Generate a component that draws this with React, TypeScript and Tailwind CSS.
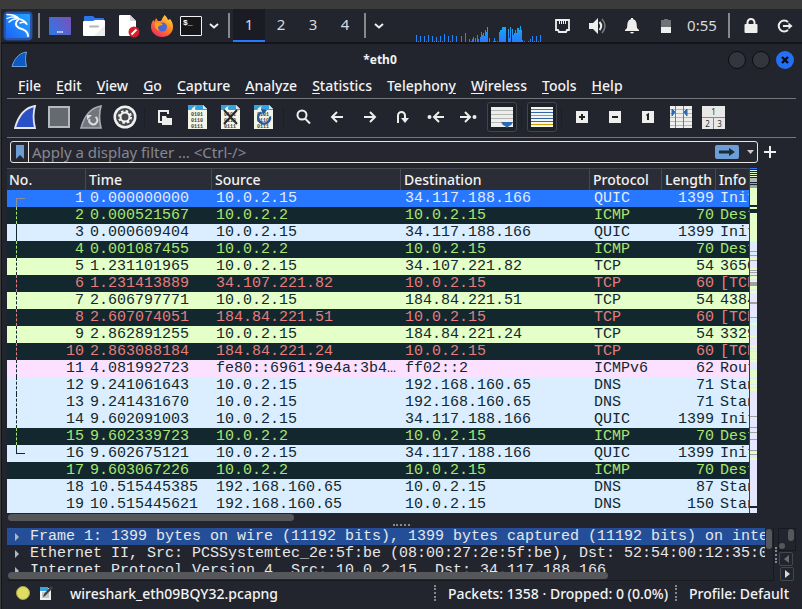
import type { ReactNode } from 'react';

/* ---------- data ---------- */

type Tone = 'selected' | 'icmp' | 'udp' | 'tcp' | 'bad' | 'icmp6';
type Packet = [string, string, string, string, string, string, Tone];

const packets: Packet[] = [
  ['0.000000000', '10.0.2.15', '34.117.188.166', 'QUIC', '1399', 'Init', 'selected'],
  ['0.000521567', '10.0.2.2', '10.0.2.15', 'ICMP', '70', 'Dest', 'icmp'],
  ['0.000609404', '10.0.2.15', '34.117.188.166', 'QUIC', '1399', 'Init', 'udp'],
  ['0.001087455', '10.0.2.2', '10.0.2.15', 'ICMP', '70', 'Dest', 'icmp'],
  ['1.231101965', '10.0.2.15', '34.107.221.82', 'TCP', '54', '3650', 'tcp'],
  ['1.231413889', '34.107.221.82', '10.0.2.15', 'TCP', '60', '[TCP', 'bad'],
  ['2.606797771', '10.0.2.15', '184.84.221.51', 'TCP', '54', '4384', 'tcp'],
  ['2.607074051', '184.84.221.51', '10.0.2.15', 'TCP', '60', '[TCP', 'bad'],
  ['2.862891255', '10.0.2.15', '184.84.221.24', 'TCP', '54', '3329', 'tcp'],
  ['2.863088184', '184.84.221.24', '10.0.2.15', 'TCP', '60', '[TCP', 'bad'],
  ['4.081992723', 'fe80::6961:9e4a:3b4…', 'ff02::2', 'ICMPv6', '62', 'Rout', 'icmp6'],
  ['9.241061643', '10.0.2.15', '192.168.160.65', 'DNS', '71', 'Stan', 'udp'],
  ['9.241431670', '10.0.2.15', '192.168.160.65', 'DNS', '71', 'Stan', 'udp'],
  ['9.602091003', '10.0.2.15', '34.117.188.166', 'QUIC', '1399', 'Init', 'udp'],
  ['9.602339723', '10.0.2.2', '10.0.2.15', 'ICMP', '70', 'Dest', 'icmp'],
  ['9.602675121', '10.0.2.15', '34.117.188.166', 'QUIC', '1399', 'Init', 'udp'],
  ['9.603067226', '10.0.2.2', '10.0.2.15', 'ICMP', '70', 'Dest', 'icmp'],
  ['10.515445385', '192.168.160.65', '10.0.2.15', 'DNS', '87', 'Stan', 'udp'],
  ['10.515445621', '192.168.160.65', '10.0.2.15', 'DNS', '150', 'Stan', 'udp'],
];

const tones: Record<Tone, string> = {
  selected: 'bg-[#2777ff] text-[#e2ebfb]',
  icmp: 'bg-[#12272e] text-[#a9e66f]',
  udp: 'bg-[#daeeff] text-[#12272e]',
  tcp: 'bg-[#e4ffc7] text-[#12272e]',
  bad: 'bg-[#12272e] text-[#e87c7c]',
  icmp6: 'bg-[#fce0ff] text-[#12272e]',
};

const G = '#e4ffc7';
const L = '#e7e6ff';
const B = '#daeeff';
const D = '#12272e';
const M = '#a0a0a0';

/* [height, colour] from top to bottom */
const minimap: [number, string][] = [
  [1, '#2777ff'], [1, D], [1, B], [1, D], [1, G], [1, D], [1, G], [1, D], [1, G], [1, D], [4, '#b4b4b8'], [1, D], [1, M], [1, D], [3, M],
  [17, G], [2, D], [2, G], [4, D], [28, G], [4, B], [6, L], [1, M], [3, B], [1, M], [2, L], [2, G], [1, M],
  [3, L], [4, L], [2, G], [1, M], [1, G], [1, M], [2, L], [1, M], [3, G], [2, L], [1, G], [4, M], [3, G], [2, L], [2, G],
  [9, L], [2, M], [13, L], [1, M], [5, B], [2, G], [9, B], [2, L], [1, G], [9, L], [1, G], [3, L], [1, G], [1, L],
  [7, G], [1, L], [2, G], [8, L], [8, G], [1, L], [5, G], [1, L], [2, G], [1, L], [3, G],
  [25, L], [1, M], [10, L], [1, M], [4, L], [1, M], [6, L], [1, M], [10, L], [1, M], [1, L], [2, G], [1, M], [3, L], [2, G],
  [46, L], [2, D], [5, L],
];

const menus: [string, number][] = [
  ['File', 0], ['Edit', 0], ['View', 0], ['Go', 0], ['Capture', 0], ['Analyze', 0],
  ['Statistics', 0], ['Telephony', 8], ['Wireless', 0], ['Tools', 0], ['Help', 0],
];

const cpu: [number, number][] = [
  [0, 7], [2, 1], [4, 6], [8, 6], [10, 1], [12, 7], [16, 6], [18, 1], [20, 5], [22, 1], [24, 6], [26, 1], [28, 8],
  [32, 6], [34, 1], [36, 7], [40, 6], [45, 6], [49, 9], [53, 3], [55, 1], [56, 3], [57, 5], [59, 4], [61, 7], [62, 3],
  [64, 5], [65, 10], [66, 7], [67, 9], [68, 6], [69, 12], [70, 10], [71, 15], [73, 4], [77, 1], [78, 4], [79, 1], [81, 1],
  [83, 10], [84, 12], [85, 12], [86, 15], [87, 15], [88, 15], [89, 15], [92, 13], [93, 4], [94, 15], [96, 13], [97, 7],
  [98, 9], [99, 12], [100, 9], [101, 14], [102, 14], [103, 12], [104, 16], [105, 12], [106, 2], [108, 1], [112, 1],
  [114, 3], [116, 6], [118, 1], [120, 6], [122, 1], [124, 7],
];

/* ---------- small parts ---------- */

function Cell({ w, children, label }: { w: string; children: ReactNode; label: string }) {
  return (
    <button aria-label={label} className={`flex h-full shrink-0 items-center justify-center ${w}`}>
      {children}
    </button>
  );
}

const Rule = () => <span className="mx-[3px] h-[25px] w-[2px] shrink-0 bg-[#87888c]" />;

const Chevron = () => (
  <svg width="10" height="6" viewBox="0 0 10 6" fill="none" stroke="#eeeeec" strokeWidth="2">
    <path d="M1 1l4 3.500L9 1" />
  </svg>
);

function Tool({ label, children, pressed }: { label: string; children: ReactNode; pressed?: boolean }) {
  return (
    <button
      aria-label={label}
      aria-pressed={pressed}
      className={
        pressed
          ? 'mr-px ml-[2px] flex h-[30px] w-[30px] shrink-0 items-center justify-center rounded-[3px] border border-[#42454c] bg-[#1c2227]'
          : 'flex h-[30px] w-[33px] shrink-0 items-center justify-center'
      }
    >
      {children}
    </button>
  );
}

const ToolGap = () => <span className="mx-[3px] h-[20px] w-px shrink-0 bg-[#1d1f26]" />;

const Page = ({ children }: { children?: ReactNode }) => (
  <svg width="21" height="24" viewBox="0 0 21 24">
    <path d="M1 0h15l4 4v20H1z" fill="#f4f5e6" />
    <path d="M1 0h15l4 4v1H1z" fill="#35a3e0" />
    <path d="M4 6q1-4 5-5-2 2 0 5z" fill="#f4f5e6" />
    <path d="M16 0v4h4z" fill="#d8e8ee" />
    <g fill="#3f4244" fontFamily="Liberation Mono, monospace" fontSize="5" fontWeight="bold">
      <text x="4" y="11">0101</text>
      <text x="4" y="17">0110</text>
      <text x="4" y="23">0111</text>
    </g>
    {children}
  </svg>
);

const Arrow = ({ children }: { children: ReactNode }) => (
  <svg width="19" height="18" viewBox="0 0 19 18" fill="none" stroke="#eeeeec" strokeWidth="2">
    {children}
  </svg>
);

const Square = ({ d }: { d: string }) => (
  <svg width="13" height="12" viewBox="0 0 13 12">
    <path d="M1 0h12v12H1z" fill="#eeeeec" />
    <path d={d} stroke="#1f2127" strokeWidth="2" fill="none" />
  </svg>
);

/* ---------- desktop panel ---------- */

function Panel() {
  return (
    <header className="flex h-[35px] items-center border-b-2 border-[#14151a] bg-[#23252e] pl-px">
      <Cell w="w-[32px]" label="Applications">
        <svg width="32" height="32" viewBox="0 0 32 32">
          <defs>
            <linearGradient id="kali" x1="0" y1="1" x2="1" y2="0">
              <stop offset="0" stopColor="#2062f5" />
              <stop offset="1" stopColor="#1fa7ff" />
            </linearGradient>
          </defs>
          <rect x="1" y="1" width="30" height="30" rx="5" fill="#2777ff" opacity=".25" />
          <rect x="2" y="2" width="28" height="28" rx="3" fill="#2777ff" opacity=".45" />
          <rect x="4" y="4" width="24" height="24" rx="1" fill="url(#kali)" />
          <g fill="none" stroke="#fff" strokeLinecap="round">
            <path d="M5 4.500c5 0 9 .5 12 4M5 8.500c4-2 8-2 12 0" strokeWidth="1.300" />
            <path d="M7 12c3-3 6-4 10-3 3 .5 5 1 7 4-2-1-4-1-6 0" strokeWidth="1.500" />
            <path d="M16 10c-3 2-3 6 1 8 5 1.500 9 3 9 8" strokeWidth="2" />
            <path d="M20 10l3 2 1.500 2" strokeWidth="1.500" />
          </g>
        </svg>
      </Cell>
      <span className="w-px" />
      <Rule />
      <Cell w="w-[34px]" label="Show desktop">
        <svg width="22" height="18" viewBox="0 0 22 18">
          <defs>
            <linearGradient id="desk" x1="0" y1=".5" x2="1" y2="0">
              <stop offset="0" stopColor="#3a72e0" />
              <stop offset="1" stopColor="#7a50b8" />
            </linearGradient>
          </defs>
          <rect width="22" height="18" rx="1" fill="url(#desk)" />
          <path d="M8 15h6" stroke="#fff" strokeWidth="1.500" strokeDasharray="1.500 .7" />
        </svg>
      </Cell>
      <Cell w="w-[34px]" label="Files">
        <svg width="22" height="22" viewBox="0 0 22 22">
          <path d="M1 2q0-1 1-1h8l2 2h8q1 0 1 1v6H1z" fill="#2f74e6" />
          <path d="M0 7q0-1 1-1h9l2-1h9q1 0 1 1v14q0 1-1 1H1q-1 0-1-1z" fill="#fff" />
          <path d="M22 10v10q0 1-1 1H11z" fill="#ededee" />
          <path d="M7 11.500h8" stroke="#b5b5b5" strokeWidth="2" strokeLinecap="round" />
        </svg>
      </Cell>
      <Cell w="w-[36px]" label="Text editor">
        <svg width="22" height="24" viewBox="0 0 22 24">
          <path d="M1 2q0-1 1-1h10l6 6v14q0 1-1 1H2q-1 0-1-1z" fill="#fff" />
          <path d="M12 1v6h6z" fill="#d5d5d5" />
          <circle cx="16" cy="18" r="5.500" fill="#d91f26" />
          <path d="M13.500 20.500l5-5" stroke="#fff" strokeWidth="2" />
        </svg>
      </Cell>
      <Cell w="w-[29px]" label="Firefox">
        <svg width="22" height="22" viewBox="0 0 22 22">
          <defs>
            <linearGradient id="fox" x1=".9" y1="0" x2=".2" y2="1">
              <stop offset="0" stopColor="#ffe14a" />
              <stop offset=".45" stopColor="#ff8a1f" />
              <stop offset="1" stopColor="#f0246a" />
            </linearGradient>
          </defs>
          <path d="M13.500 0c2 2 3 3 3.500 5l2-1c2 2 3 5 3 8 0 6-5 10-11 10S0 17.500 0 12c0-3 1-6 3-7l.5 2L5 3l2 3h3c1-2 2-4 3.500-6z" fill="url(#fox)" />
          <circle cx="11.500" cy="12" r="4.500" fill="#4b66d8" />
          <path d="M4 8c3-1 5 0 8 1-1 2-4 1-5 3-.5 2 1 3 2 4-4-1-6-4-5-8z" fill="#ffa01f" />
        </svg>
      </Cell>
      <Cell w="w-[30px]" label="Terminal">
        <span className="flex h-[20px] w-[22px] items-start rounded-[1px] border border-[#f2f2f2] bg-[#15171a] pl-[2px] font-['Liberation_Mono',monospace] text-[8px] leading-[11px] font-bold text-white">
          $_
        </span>
      </Cell>
      <Cell w="w-[16px]" label="More terminals"><Chevron /></Cell>
      <span className="w-[3px]" />
      <Rule />
      <nav aria-label="Workspaces" className="flex h-full text-[15px] text-[#d8dade]">
        {['1', '2', '3', '4'].map((n) => (
          <button
            key={n}
            className={
              n === '1'
                ? 'h-full w-[32px] border-b-2 border-[#2777ff] bg-[#1b1c23]'
                : 'h-full w-[32px] border-b-2 border-transparent'
            }
          >
            {n}
          </button>
        ))}
      </nav>
      <Rule />
      <Cell w="w-[20px]" label="Window list"><Chevron /></Cell>
      <span className="flex-1" />
      <svg className="shrink-0 self-end" width="126" height="18" viewBox="0 0 126 18" aria-label="CPU graph">
        <defs>
          <linearGradient id="cpu" gradientUnits="userSpaceOnUse" x1="0" y1="0" x2="0" y2="18">
            <stop offset="0" stopColor="#0fb4f0" />
            <stop offset="1" stopColor="#2a78ff" />
          </linearGradient>
        </defs>
        {cpu.map(([x, h]) => (
          <rect key={x} x={x} y={18 - h} width="1" height={h} fill="url(#cpu)" />
        ))}
      </svg>
      <span className="w-[3px]" />
      <Cell w="w-[34px]" label="Network">
        <svg width="15" height="14" viewBox="0 0 15 14" fill="none" stroke="#eeeeec">
          <path d="M1 1h13v10h-2l-1 2H4l-1-2H1z" strokeWidth="1.800" />
          <path d="M4.500 2v3M6.500 2v3M8.500 2v3M10.500 2v3" />
        </svg>
      </Cell>
      <Cell w="w-[37px]" label="Volume">
        <svg width="18" height="16" viewBox="0 0 18 16">
          <path d="M0 5h4l5-5v16l-5-5H0z" fill="#eeeeec" />
          <path d="M10.500 4q3.500 4 0 8" stroke="#eeeeec" strokeWidth="2" fill="none" />
          <path d="M13 1q6 7 0 14" stroke="#77797d" strokeWidth="1.500" fill="none" />
        </svg>
      </Cell>
      <Cell w="w-[32px]" label="Notifications">
        <svg width="14" height="16" viewBox="0 0 14 16" fill="#eeeeec">
          <path d="M6 0h2v1q3 1 3.500 4l.5 5 2 2v1H0v-1l2-2 .5-5Q3 2 6 1zM5 14h4q-.5 1.500-2 1.500T5 14z" />
        </svg>
      </Cell>
      <Cell w="w-[36px]" label="Battery">
        <svg width="10" height="14" viewBox="0 0 10 14">
          <path d="M3 0h4v1h3v7H0V1h3z" fill="#707277" />
          <path d="M0 8h10v6H0z" fill="#eeeeec" />
        </svg>
      </Cell>
      <span className="w-[36px] shrink-0 text-center text-[15px] text-[#d8dade]">0:55</span>
      <span className="w-[5px]" />
      <Rule />
      <Cell w="w-[35px]" label="Lock screen">
        <svg width="14" height="15" viewBox="0 0 14 15">
          <path d="M3.500 7V4.500a3.500 3.500 0 017 0V7" fill="none" stroke="#eeeeec" strokeWidth="2" />
          <rect x=".5" y="6" width="13" height="9" rx="1" fill="#eeeeec" />
        </svg>
      </Cell>
      <Cell w="w-[34px]" label="Log out">
        <svg width="16" height="14" viewBox="0 0 16 14" fill="none" stroke="#eeeeec" strokeWidth="2">
          <path d="M11 3A5.500 5.500 0 1011 11M6 7h6" />
          <path d="M11.500 3.500L15.500 7l-4 3.500z" fill="#eeeeec" stroke="none" />
        </svg>
      </Cell>
    </header>
  );
}

/* ---------- wireshark toolbar ---------- */

const fin = 'M1 23C4 12 9 3 21 1c-2 7-2 14 0 22z';

function Toolbar() {
  return (
    <div role="toolbar" className="flex h-[39px] items-center border-b border-[#74767c] pb-[2px] pl-[2px]">
      <Tool label="Start capture">
        <svg width="23" height="25" viewBox="0 0 23 25">
          <path d={fin} fill="#2b4fc4" stroke="#e6e6ea" strokeWidth="1.800" />
        </svg>
      </Tool>
      <Tool label="Stop capture">
        <svg width="23" height="22" viewBox="0 0 23 22">
          <path d="M2 1h20v20H2z" fill="#666a70" stroke="#b4b8bf" strokeWidth="2" />
        </svg>
      </Tool>
      <Tool label="Restart capture">
        <svg width="23" height="25" viewBox="0 0 23 25">
          <path d={fin} fill="#73777d" stroke="#a9acb2" strokeWidth="1.600" />
          <path d="M9.500 14a4 4 0 106-2" fill="none" stroke="#dcdde0" strokeWidth="2" />
          <path d="M7 15l0-5 5 0z" fill="#dcdde0" />
        </svg>
      </Tool>
      <Tool label="Capture options">
        <svg width="24" height="24" viewBox="0 0 24 24" fill="none">
          <circle cx="12" cy="12" r="11.500" fill="#f0f0f0" />
          <circle cx="12" cy="12" r="9" fill="#45484c" />
          <circle cx="12" cy="12" r="6" stroke="#f5f5f5" strokeWidth="2" strokeDasharray="2.400 2.312" />
          <circle cx="12" cy="12" r="4.500" stroke="#f5f5f5" strokeWidth="2" />
        </svg>
      </Tool>
      <ToolGap />
      <Tool label="Open">
        <svg width="17" height="16" viewBox="0 0 17 16">
          <path d="M12 5V2H3v11h3" fill="none" stroke="#eeeeec" strokeWidth="2" />
          <path d="M6 7h4l1 2h5v7H6z" fill="#eeeeec" />
        </svg>
      </Tool>
      <Tool label="Save"><Page /></Tool>
      <Tool label="Close">
        <Page><path d="M4 5l13 14M17 5L4 19" stroke="#22282d" strokeWidth="2" /></Page>
      </Tool>
      <Tool label="Reload">
        <Page>
          <path d="M8 7.500a6 6 0 109 4" fill="none" stroke="#27589f" strokeWidth="2.400" />
          <path d="M8 4l6 1-4 5z" fill="#27589f" />
        </Page>
      </Tool>
      <ToolGap />
      <Tool label="Find packet"><Arrow><circle cx="8" cy="7" r="4.500" /><path d="M11 10.500l5 5" /></Arrow></Tool>
      <Tool label="Previous packet"><Arrow><path d="M16 9H6M10 4L5 9l5 5" /></Arrow></Tool>
      <Tool label="Next packet"><Arrow><path d="M4 9h10M10 4l5 5-5 5" /></Arrow></Tool>
      <Tool label="Go to packet"><Arrow><path d="M5 15V7.500a3.500 3.500 0 017 0V11" /><path d="M8 10h8l-4 5z" fill="#eeeeec" stroke="none" /></Arrow></Tool>
      <Tool label="First packet"><Arrow><path d="M18 9H9M13 4L8 9l5 5M2 9h3" /><circle cx="3.500" cy="9" r="1" /></Arrow></Tool>
      <Tool label="Last packet"><Arrow><path d="M1 9h9M6 4l5 5-5 5M14 9h3" /><circle cx="15.500" cy="9" r="1" /></Arrow></Tool>
      <Tool label="Auto scroll" pressed>
        <svg width="22" height="22" viewBox="0 0 22 22">
          <path d="M0 1h22v20H0z" fill="#eeeeec" />
          <path d="M0 4.500h22M0 8.500h22M0 12.500h22M0 16.500h22" stroke="#b5b7b2" />
          <path d="M10 16h12q-1 3-4 4l-2 2-2-2q-3-1-4-4z" fill="#2f68b0" />
        </svg>
      </Tool>
      <ToolGap />
      <Tool label="Colorize" pressed>
        <svg width="22" height="22" viewBox="0 0 22 22" shapeRendering="crispEdges">
          <path d="M0 1h22v20H0z" fill="#f4f5f2" />
          <path d="M0 3h22v1H0z" fill="#e03a3a" />
          <path d="M0 6h22v1H0zM0 12h22v1H0z" fill="#3465a4" />
          <path d="M0 9h22v1H0z" fill="#73c216" />
          <path d="M0 15h22v1H0z" fill="#75507b" />
          <path d="M0 18h22v1H0z" fill="#c4a000" />
        </svg>
      </Tool>
      <ToolGap />
      <Tool label="Zoom in"><Square d="M4 6h6M7 3v6" /></Tool>
      <Tool label="Zoom out"><Square d="M4 6h6" /></Tool>
      <Tool label="Normal size"><Square d="M5.500 4.500L7 3.500V9" /></Tool>
      <Tool label="Resize columns">
        <svg width="23" height="22" viewBox="0 0 23 22">
          <path d="M1 0h22v22H1z" fill="#eeeeec" />
          <path d="M1 3.500h22M1 7.500h22M1 11.500h22M1 15.500h22M1 19.500h22" stroke="#b5b7b2" />
          <path d="M6.500 0v22M14.500 0v22" stroke="#77797a" />
          <path d="M3 3l3 3-3 4zM18 3l-3 3 3 4z" fill="#2f68b0" stroke="#2f68b0" />
        </svg>
      </Tool>
      <Tool label="Layout">
        <span className="grid h-[23px] w-[23px] shrink-0 grid-cols-2 gap-px bg-[#85878a] text-[8px] leading-[11px] text-[#333]">
          <span className="col-span-2 bg-[#e8e8e6]">1</span>
          <span className="bg-[#e8e8e6]">2</span>
          <span className="bg-[#e8e8e6]">3</span>
        </span>
      </Tool>
    </div>
  );
}

/* ---------- packet list ---------- */

function Ladder({ index }: { index: number }) {
  if (index > 15) return <span />;
  if (index === 0) return <span className="h-[9px] w-[9px] self-end border-t border-l border-[#8d8f94]" />;
  if (index === 15) return <span className="h-[9px] w-[9px] self-start border-b border-l border-current" />;
  return (
    <span
      className={
        index === 2 ? 'h-[17px] w-[9px] border-l border-current' : 'h-[17px] w-[9px] border-l border-dashed border-current'
      }
    />
  );
}

function PacketList() {
  return (
    <section className="flex pr-[39px]">
      <div className="min-w-0 flex-1 border-r border-[#3b3e45]">
        <table className="w-full table-fixed border-separate border-spacing-0">
          <colgroup>
            <col className="w-[79px]" />
            <col className="w-[126px]" />
            <col className="w-[189px]" />
            <col className="w-[189px]" />
            <col className="w-[72px]" />
            <col className="w-[54px]" />
            <col />
          </colgroup>
          <thead>
            <tr className="bg-[#2a2d35] text-left text-[14px] leading-[21px] text-[#f2f3f4]">
              {['No.', 'Time', 'Source', 'Destination', 'Protocol', 'Length', 'Info'].map((h) => (
                <th
                  key={h}
                  className="h-[22px] border-t border-r border-[#464950] p-0 pl-[3px] font-medium whitespace-nowrap first:pl-[2px] last:border-r-0"
                >
                  {h}
                </th>
              ))}
            </tr>
          </thead>
          <tbody className="font-['Liberation_Mono',monospace] text-[15px] leading-[17px] whitespace-nowrap">
            {packets.map(([time, src, dst, proto, len, info, tone], i) => (
              <tr key={i} className={`h-[17px] ${tones[tone]}`}>
                <td className="p-0 pr-[2px] pl-[9px]">
                  <div className="flex h-[17px] justify-between">
                    <Ladder index={i} />
                    <span>{i + 1}</span>
                  </div>
                </td>
                <td className="p-0 pl-[4px]">{time}</td>
                <td className="overflow-hidden p-0 pl-[4px]">{src}</td>
                <td className="overflow-hidden p-0 pl-[4px]">{dst}</td>
                <td className="p-0 pl-[4px]">{proto}</td>
                <td className="p-0 pr-[2px] text-right">{len}</td>
                <td className="overflow-hidden p-0 pl-[4px]">{info}</td>
              </tr>
            ))}
          </tbody>
        </table>
      </div>
      <div className="flex w-[7px] flex-col overflow-hidden">
        {minimap.map(([h, c], i) => (
          <span key={i} className="shrink-0" style={{ height: h, background: c }} />
        ))}
      </div>
    </section>
  );
}

const details = [
  'Frame 1: 1399 bytes on wire (11192 bits), 1399 bytes captured (11192 bits) on inte',
  'Ethernet II, Src: PCSSystemtec_2e:5f:be (08:00:27:2e:5f:be), Dst: 52:54:00:12:35:02',
  'Internet Protocol Version 4, Src: 10.0.2.15, Dst: 34.117.188.166',
];

const Dots = ({ vertical }: { vertical?: boolean }) => (
  <span
    className={
      vertical
        ? 'h-[16px] w-0 border-l-2 border-dotted border-[#85878b]'
        : 'h-0 w-[17px] border-t-2 border-dotted border-[#85878b]'
    }
  />
);

function Details() {
  return (
    <section className="flex">
      <div className="h-[53px] min-w-0 flex-1 border-r border-b border-[#191a20]">
        <div className="flex h-[44px]">
          <ul className="min-w-0 flex-1 overflow-hidden font-['Liberation_Mono',monospace] text-[15px] leading-[17px] whitespace-nowrap text-[#e6e7e9]">
            {details.map((line, i) => (
              <li key={line} className={i === 0 ? 'flex h-[17px] items-center bg-[#244f98] pl-[8px]' : 'flex h-[17px] items-center pl-[8px]'}>
                <svg className="mr-[11px] shrink-0" width="4" height="8" viewBox="0 0 4 8">
                  <path d="M0 0l4 4-4 4z" fill="#b4b7bf" />
                </svg>
                {line}
              </li>
            ))}
          </ul>
          <span className="mt-px mr-px ml-px h-[20px] w-[6px] rounded-full bg-[#56575b]" />
        </div>
        <span className="ml-px block h-[7px] w-[600px] rounded-full bg-[#56575b]" />
      </div>
      <div className="flex w-[4px] items-center justify-center"><Dots vertical /></div>
      <div className="flex w-[18px] flex-col items-center border-t border-[#191a20]">
        <div className="flex h-[22px] w-full items-end justify-between border-x border-b border-[#191a20]">
          <span className="mb-[1px] size-[6px] rounded-full bg-[#56575b]" />
          <span className="mr-px mb-[9px] h-[12px] w-[6px] rounded-full bg-[#56575b]" />
        </div>
        <button aria-label="Scroll left" className="mt-px mr-[2px] flex size-[14px] items-center justify-center rounded-[2px] border border-[#45474e]">
          <svg width="5" height="8" viewBox="0 0 5 8"><path d="M5 0L0 4l5 4z" fill="#6a6c71" /></svg>
        </button>
        <button aria-label="Scroll right" className="mt-px flex size-[14px] items-center justify-center rounded-[2px] border border-[#45474e]">
          <svg width="5" height="8" viewBox="0 0 5 8"><path d="M0 0l5 4-5 4z" fill="#d6d7d9" /></svg>
        </button>
      </div>
    </section>
  );
}

export default function App() {
  return (
    <div className="min-h-screen w-full overflow-hidden bg-[#3b3b3b] pt-[9px] pl-px font-['Noto_Sans',sans-serif]">
      <Panel />
      <main className="min-h-[565px] border-l border-[#14151a] bg-[#23252e] pr-[6px] pl-[5px] text-[14px] text-[#f2f3f4]">
        <div className="flex h-[31px] items-center pl-[4px]">
          <svg width="17" height="17" viewBox="0 0 17 17">
            <path d="M1 15.500C3 9 7 2 15.500 1c-1.500 5-1 10 0 14.500z" fill="#0f59c4" stroke="#6aa3d8" />
          </svg>
          <h1 className="flex-1 pl-[4px] text-center text-[12px] font-bold">*eth0</h1>
          <div className="flex gap-[6px] pr-[2px]">
            <button aria-label="Minimize" className="size-[18px] rounded-full border border-[#0c0d10] bg-[#33363f]" />
            <button aria-label="Maximize" className="size-[18px] rounded-full border border-[#0c0d10] bg-[#33363f]" />
            <button aria-label="Close window" className="flex size-[18px] items-center justify-center rounded-full bg-[#2470f5]">
              <svg width="8" height="8" viewBox="0 0 8 8"><path d="M1 1l6 6M7 1L1 7" stroke="#0b0d14" strokeWidth="2.400" /></svg>
            </button>
          </div>
        </div>
        <nav className="flex h-[24px] items-center gap-[15px] border-b border-[#74767c] pb-[2px] pl-[11px] font-medium">
          {menus.map(([name, at]) => (
            <button key={name} className="shrink-0">
              {name.slice(0, at)}
              <u className="underline-offset-2">{name[at]}</u>
              {name.slice(at + 1)}
            </button>
          ))}
        </nav>
        <Toolbar />
        <div className="flex h-[30px] items-center pb-[2px] pl-[3px]">
          <div className="flex h-[22px] min-w-0 flex-1 items-center rounded-[3px] border border-[#e8e6e0] bg-[#252630]">
            <button aria-label="Bookmarks" className="flex h-full w-[18px] items-center justify-center border-r border-[#e8e6e0]">
              <svg width="8" height="14" viewBox="0 0 8 14"><path d="M0 0h8v14l-4-4-4 4z" fill="#6d9cd2" /></svg>
            </button>
            <input
              aria-label="Display filter"
              placeholder="Apply a display filter … <Ctrl-/>"
              className="h-full min-w-0 flex-1 bg-transparent pl-[3px] text-[15px] outline-none placeholder:text-[#868890]"
            />
            <button aria-label="Apply filter" className="flex h-[14px] w-[24px] items-center justify-center rounded-[2px] bg-[#6d9fd6]">
              <svg width="16" height="8" viewBox="0 0 16 8"><path d="M0 2.500h10V0l6 4-6 4V5.500H0z" fill="#1d2a3a" /></svg>
            </button>
            <button aria-label="Filter history" className="flex w-[18px] justify-center pl-[4px]">
              <svg width="7" height="4" viewBox="0 0 7 4"><path d="M0 0h7L3.500 4z" fill="#c9cacc" /></svg>
            </button>
          </div>
          <button aria-label="Add filter button" className="mr-[20px] ml-[6px]">
            <svg width="12" height="12" viewBox="0 0 12 12"><path d="M0 6h12M6 0v12" stroke="#eeeeec" strokeWidth="2" /></svg>
          </button>
        </div>
        <PacketList />
        <div className="h-[9px] py-px">
          <span className="ml-px block h-[7px] w-[286px] rounded-full bg-[#56575b]" />
        </div>
        <div className="flex h-[6px] items-center justify-center"><Dots /></div>
        <Details />
        <footer className="flex h-[26px] items-center pb-[2px] pl-[9px] font-medium whitespace-nowrap">
          <svg width="14" height="14" viewBox="0 0 14 14"><circle cx="7" cy="7" r="6.500" fill="#dede62" stroke="#a5a54c" /></svg>
          <svg className="ml-[9px]" width="14" height="15" viewBox="0 0 14 15">
            <path d="M1 2h11v12H1z" fill="#eef0ee" />
            <path d="M1 1h8v4H1z" fill="#35a3e0" />
            <path d="M3 7h7M3 9h7M3 11h7" stroke="#9a9c9c" />
            <path d="M4 11l1-3 7-8 2 2-8 8z" fill="#3f4244" />
          </svg>
          <span className="ml-[17px] flex-1">wireshark_eth09BQY32.pcapng</span>
          <Dots vertical />
          <span className="ml-[12px]">Packets: 1358 · Dropped: 0 (0.0%)</span>
          <span className="ml-[7px] flex"><Dots vertical /></span>
          <span className="mr-[7px] ml-[12px]">Profile: Default</span>
        </footer>
      </main>
    </div>
  );
}
